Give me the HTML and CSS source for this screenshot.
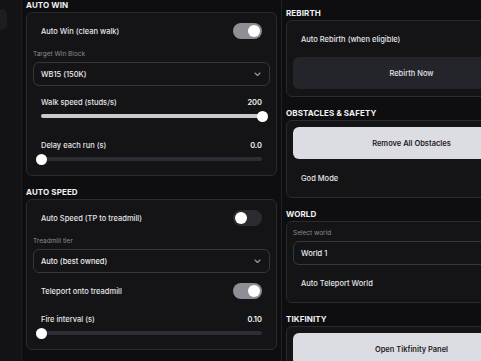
FILE: index.html
```html
<!DOCTYPE html>
<html lang="en">
<head>
    <meta charset="UTF-8">
    <meta name="viewport" content="width=device-width, initial-scale=1.0">
    <title>Panel</title>
    <link rel="stylesheet" href="styles.css">
</head>
<body>
    <div class="app">
        <aside class="sidebar">
            <div class="nav-item"></div>
        </aside>

        <!-- left column -->
        <div class="pane pane-left">
            <section class="group">
                <h2 class="group-title">Auto Win</h2>
                <div class="card">
                    <div class="toggle-row">
                        <span>Auto Win (clean walk)</span>
                        <span class="toggle on"><span class="knob"></span></span>
                    </div>
                    <div class="field">
                        <div class="field-label">Target Win Block</div>
                        <div class="select">
                            <span>WB15 (150K)</span>
                            <svg class="chevron" width="7" height="5" viewBox="0 0 7 5"><polyline points="1,1 3.5,3.5 6,1" fill="none" stroke="#9a9ba1" stroke-width="1.1" stroke-linecap="round" stroke-linejoin="round"/></svg>
                        </div>
                    </div>
                    <div class="slider">
                        <div class="slider-head">
                            <span>Walk speed (studs/s)</span>
                            <span class="slider-value">200</span>
                        </div>
                        <div class="track">
                            <div class="fill" style="width: 100%"></div>
                            <span class="thumb" style="left: 100%"></span>
                        </div>
                    </div>
                    <div class="slider">
                        <div class="slider-head">
                            <span>Delay each run (s)</span>
                            <span class="slider-value">0.0</span>
                        </div>
                        <div class="track">
                            <div class="fill" style="width: 0%"></div>
                            <span class="thumb" style="left: 0%"></span>
                        </div>
                    </div>
                </div>
            </section>

            <section class="group">
                <h2 class="group-title">Auto Speed</h2>
                <div class="card">
                    <div class="toggle-row">
                        <span>Auto Speed (TP to treadmill)</span>
                        <span class="toggle"><span class="knob"></span></span>
                    </div>
                    <div class="field">
                        <div class="field-label">Treadmill tier</div>
                        <div class="select">
                            <span>Auto (best owned)</span>
                            <svg class="chevron" width="7" height="5" viewBox="0 0 7 5"><polyline points="1,1 3.5,3.5 6,1" fill="none" stroke="#9a9ba1" stroke-width="1.1" stroke-linecap="round" stroke-linejoin="round"/></svg>
                        </div>
                    </div>
                    <div class="toggle-row">
                        <span>Teleport onto treadmill</span>
                        <span class="toggle on"><span class="knob"></span></span>
                    </div>
                    <div class="slider">
                        <div class="slider-head">
                            <span>Fire interval (s)</span>
                            <span class="slider-value">0.10</span>
                        </div>
                        <div class="track">
                            <div class="fill" style="width: 0%"></div>
                            <span class="thumb" style="left: 0%"></span>
                        </div>
                    </div>
                </div>
            </section>
        </div>

        <div class="divider"></div>

        <!-- right column -->
        <div class="pane pane-right">
            <section class="group">
                <h2 class="group-title">Rebirth</h2>
                <div class="card">
                    <div class="toggle-row">
                        <span>Auto Rebirth (when eligible)</span>
                        <span class="toggle"><span class="knob"></span></span>
                    </div>
                    <button class="btn">Rebirth Now</button>
                </div>
            </section>

            <section class="group">
                <h2 class="group-title">Obstacles &amp; Safety</h2>
                <div class="card">
                    <button class="btn btn-light">Remove All Obstacles</button>
                    <div class="toggle-row">
                        <span>God Mode</span>
                        <span class="toggle"><span class="knob"></span></span>
                    </div>
                </div>
            </section>

            <section class="group">
                <h2 class="group-title">World</h2>
                <div class="card">
                    <div class="field">
                        <div class="field-label">Select world</div>
                        <div class="select">
                            <span>World 1</span>
                            <svg class="chevron" width="7" height="5" viewBox="0 0 7 5"><polyline points="1,1 3.5,3.5 6,1" fill="none" stroke="#9a9ba1" stroke-width="1.1" stroke-linecap="round" stroke-linejoin="round"/></svg>
                        </div>
                    </div>
                    <div class="toggle-row">
                        <span>Auto Teleport World</span>
                        <span class="toggle"><span class="knob"></span></span>
                    </div>
                </div>
            </section>

            <section class="group">
                <h2 class="group-title">Tikfinity</h2>
                <div class="card">
                    <button class="btn btn-light">Open Tikfinity Panel</button>
                </div>
            </section>
        </div>
    </div>
</body>
</html>
```

FILE: styles.css
```css
* {
    margin: 0;
    padding: 0;
    box-sizing: border-box;
}

body, html {
    width: 100%;
    height: 100%;
    background: #0e0e10;
    color: #e4e4e8;
    font-family: "Inter", "Liberation Sans", sans-serif;
    font-size: 7.5px;
    font-weight: 500;
    overflow: hidden;
}

.app {
    display: flex;
    width: 100%;
    height: 100%;
    overflow: hidden;
}

.sidebar {
    flex: 0 0 22px;
    background: #131316;
    border-right: 1px solid #1b1b1f;
    padding-top: 9px;
}

.nav-item {
    width: 7px;
    height: 21px;
    background: #1d1d21;
    border-radius: 0 5px 5px 0;
}

.pane {
    display: flex;
    flex-direction: column;
    gap: 11px;
    overflow: hidden;
}

.pane-left {
    flex: 0 0 259px;
    padding: 0 4px;
}

.divider {
    flex: 0 0 1px;
    background: #212126;
}

.pane-right {
    flex: 1 1 auto;
    min-width: 0;
    padding: 8px 0 0 4px;
}

.group-title {
    font-size: 8px;
    font-weight: 700;
    line-height: 10px;
    text-transform: uppercase;
    color: #f2f2f4;
    margin-bottom: 2px;
    letter-spacing: 0.1px;
}

.card {
    flex: none;
    width: 251px;
    background: #141417;
    border: 1px solid #2a2a2f;
    border-radius: 6px;
    padding: 6px 6px 7px;
}

.group {
    flex: none;
}

.toggle-row {
    height: 24px;
    padding: 0 8px;
    display: flex;
    align-items: center;
    justify-content: space-between;
}

.toggle {
    position: relative;
    width: 29px;
    height: 16px;
    border-radius: 8px;
    background: #2b2c31;
}

.toggle .knob {
    position: absolute;
    top: 2px;
    left: 2px;
    width: 12px;
    height: 12px;
    border-radius: 50%;
    background: #ffffff;
}

.toggle.on {
    background: #8e8f96;
}

.toggle.on .knob {
    left: 15px;
}

.field,
.card > * + .toggle-row {
    margin-top: 6px;
}

.btn + .toggle-row {
    margin-top: 7px;
}

.card > .field:first-child {
    margin-top: 0;
}

.field-label {
    height: 10px;
    line-height: 10px;
    font-size: 6.5px;
    font-weight: 400;
    color: #8b8b92;
    margin-bottom: 3px;
}

.select {
    height: 24px;
    border: 1px solid #36373c;
    border-radius: 6px;
    padding: 0 8px 0 7px;
    display: flex;
    align-items: center;
    justify-content: space-between;
    color: #eeeef0;
}

.slider {
    margin-top: 10px;
    padding: 0 8px;
}

.slider + .slider {
    margin-top: 15px;
}

.slider:last-child {
    margin-bottom: 1px;
}

.slider-head {
    height: 12px;
    display: flex;
    align-items: center;
    justify-content: space-between;
}

.slider-value {
    font-weight: 600;
    color: #f2f2f4;
}

.track {
    position: relative;
    height: 16px;
}

.track::before,
.fill {
    content: "";
    position: absolute;
    left: 0;
    top: 6px;
    height: 4px;
    border-radius: 2px;
}

.track::before {
    right: 0;
    background: #2d2e35;
}

.fill {
    background: #c9cacf;
}

.thumb {
    position: absolute;
    top: 2.5px;
    width: 11px;
    height: 11px;
    margin-left: -5.5px;
    border-radius: 50%;
    background: #ffffff;
}

.btn {
    display: block;
    width: 100%;
    height: 32px;
    margin-top: 6px;
    border: none;
    border-radius: 6px;
    background: #24252b;
    color: #e2e2e6;
    font-family: inherit;
    font-size: 7.5px;
    font-weight: 500;
}

.card > .btn:first-child {
    margin-top: 0;
}

.btn-light {
    background: #dcdde2;
    color: #1f2025;
    font-weight: 600;
}
```
